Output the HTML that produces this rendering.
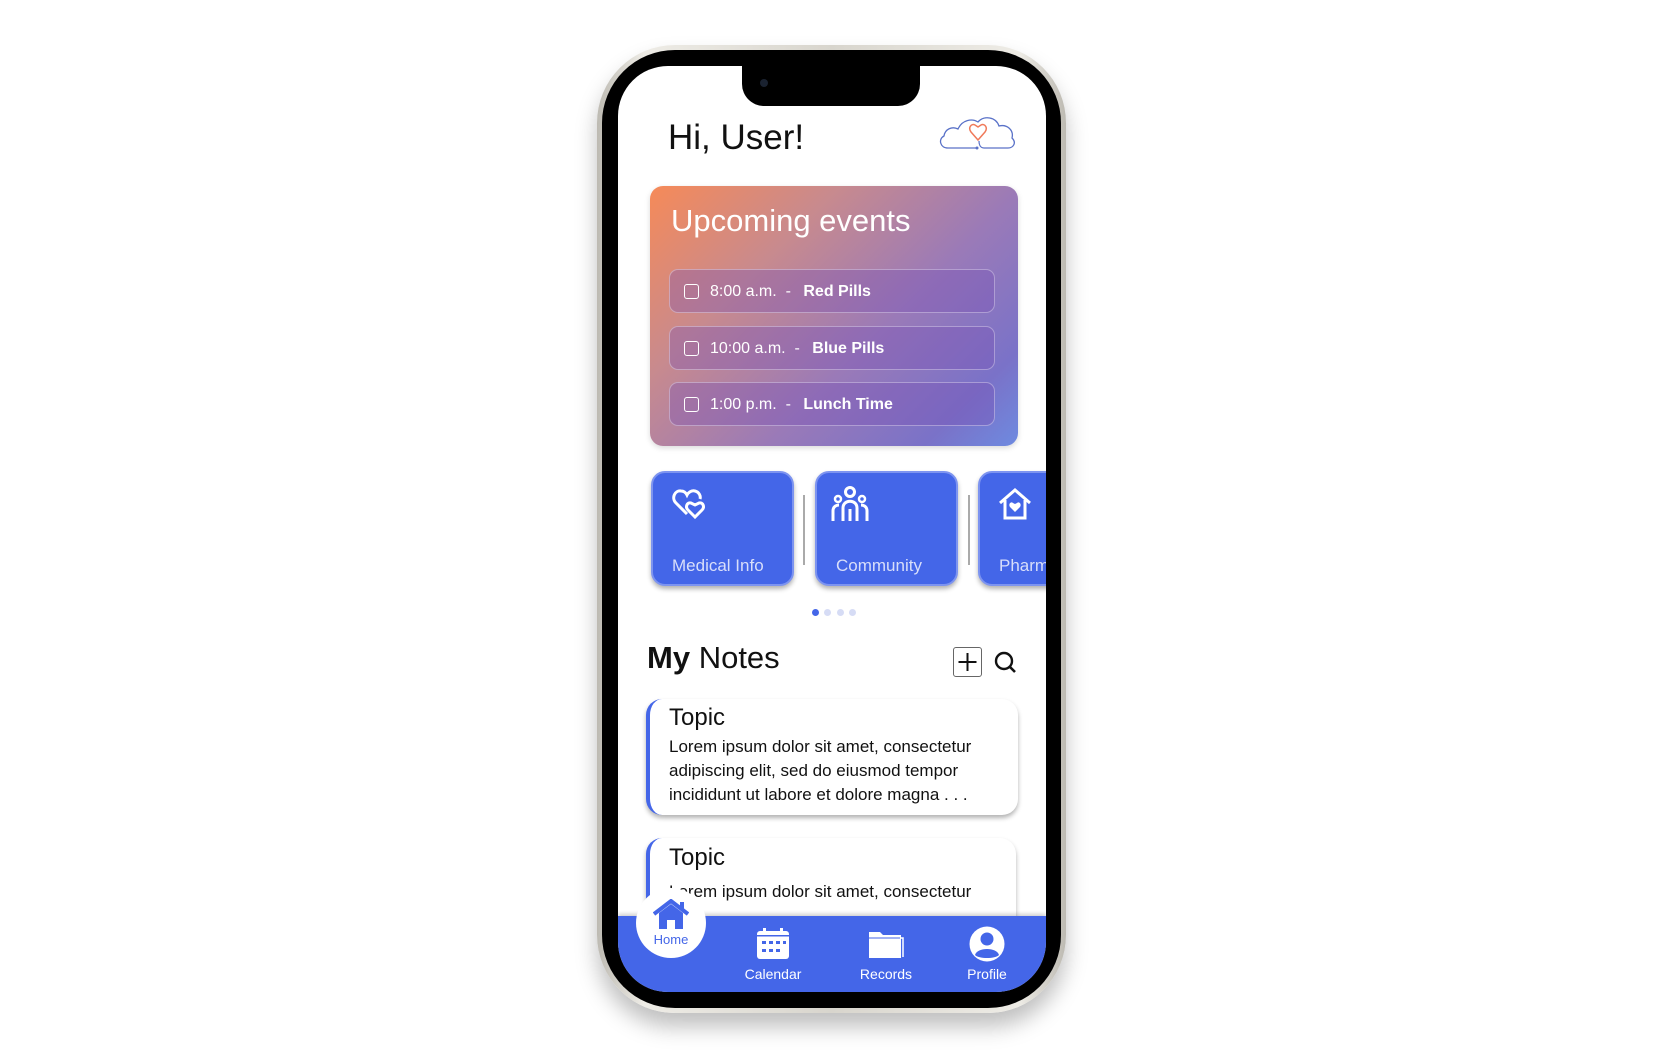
<!DOCTYPE html>
<html><head><meta charset="utf-8"><style>
*{margin:0;padding:0;box-sizing:border-box}
body{width:1663px;height:1057px;background:#fff;position:relative;overflow:hidden;font-family:"Liberation Sans",sans-serif}
.abs{position:absolute}
.frame{left:597px;top:45px;width:469px;height:968px;border-radius:78px;background:linear-gradient(90deg,#bdbab2,#eeece6 10%,#d8d5cd 50%,#eeece6 90%,#bdbab2);box-shadow:0 14px 22px rgba(0,0,0,.25)}
.bezel{left:602px;top:50px;width:459px;height:958px;border-radius:73px;background:#000}
.screen{left:618px;top:66px;width:428px;height:926px;border-radius:50px;background:#fff;overflow:hidden}
.notch{left:742px;top:60px;width:178px;height:46px;background:#000;border-radius:0 0 22px 22px}
.t{position:absolute;white-space:nowrap}
.card{left:650px;top:186px;width:368px;height:260px;border-radius:13px;background:linear-gradient(135deg,#f68a58 0%,#c88a8e 30%,#9a7ab8 60%,#7a72c8 85%,#6e8ae0 100%);box-shadow:0 2px 6px rgba(0,0,0,.15)}
.row{position:absolute;left:669px;width:326px;height:44px;border-radius:9px;background:rgba(120,80,180,.35);border:1px solid rgba(255,255,255,.35)}
.cb{position:absolute;left:14px;top:14px;width:15px;height:15px;border:1.6px solid #fff;border-radius:3px}
.row .t{left:40px;top:13px;color:#fff;font-size:16px}
.row b{margin-left:8px}
.tile{position:absolute;top:11px;height:115px;width:143px;border-radius:14px;background:#4466e8;box-shadow:0 3px 5px rgba(0,0,0,.3);border:2px solid #7d94f0}
.tile .t{left:19px;top:83px;color:#d8defa;font-size:17px}
.div{position:absolute;top:35px;width:1.5px;height:70px;background:#aaa}
.dot{position:absolute;top:609px;width:7px;height:7px;border-radius:50%;background:#d6dcf5}
.note{position:absolute;left:646px;width:372px;background:#fff;border-radius:16px;border-left:4px solid #4466e8;box-shadow:0 3px 5px rgba(0,0,0,.3)}
.nl{position:absolute;color:#fff;font-size:14px;top:966px;text-align:center;width:100px}
</style></head><body>
<div class="abs frame"></div>
<div class="abs bezel"></div>
<div class="abs screen"></div>
<div class="abs notch"></div>
<div class="abs" style="left:760px;top:79px;width:8px;height:8px;border-radius:50%;background:#1a2230"></div>

<div class="t" style="left:668px;top:118px;font-size:35px;color:#111">Hi, User!</div>
<svg class="abs" style="left:938px;top:113px" width="80" height="38" viewBox="0 0 80 38">
<path d="M39 35 H10 C2 35 0 26 6 23 C7 16 14 13 20 16 C24 7 34 5 40 9 C46 2 58 4 61 13 C69 11 76 17 74 25 C79 30 75 35 70 35 H46 C42 35 41 31 41 28" fill="none" stroke="#5a72c8" stroke-width="1.3"/>
<circle cx="39" cy="35" r="1.5" fill="#5a72c8"/>
<path d="M40 27 L33 19 C30 15 33 10 37 12 L40 14 L43 12 C47 10 50 15 47 19 Z" fill="none" stroke="#f07a5a" stroke-width="1.5"/>
</svg>

<div class="abs card"></div>
<div class="t" style="left:671px;top:203px;font-size:31px;color:#fff">Upcoming events</div>
<div class="row" style="top:269px"><div class="cb"></div><div class="t">8:00 a.m. &nbsp;- <b>Red Pills</b></div></div>
<div class="row" style="top:326px"><div class="cb"></div><div class="t">10:00 a.m. &nbsp;- <b>Blue Pills</b></div></div>
<div class="row" style="top:382px"><div class="cb"></div><div class="t">1:00 p.m. &nbsp;- <b>Lunch Time</b></div></div>

<div class="abs" style="left:618px;top:460px;width:428px;height:140px;overflow:hidden">
<div class="tile" style="left:33px"><div class="t">Medical Info</div>
<svg style="position:absolute;left:19px;top:15px" width="36" height="32" viewBox="0 0 36 32"><path d="M15 26 L4 15 C-1 10 3 2 9 3 C12 3 14 5 15 7 C16 5 19 2 23 3 C27 4 29 8 28 11" fill="none" stroke="#fff" stroke-width="3"/><path d="M23 29 L16 22 C13 19 15 14 19 15 L23 17 L27 15 C31 14 33 19 30 22 Z" fill="none" stroke="#fff" stroke-width="3"/></svg></div>
<div class="div" style="left:185px"></div>
<div class="tile" style="left:197px"><div class="t">Community</div>
<svg style="position:absolute;left:14px;top:12px" width="38" height="38" viewBox="0 0 38 38"><circle cx="19" cy="7" r="4.5" fill="none" stroke="#fff" stroke-width="3"/><circle cx="7" cy="14" r="3" fill="none" stroke="#fff" stroke-width="2.5"/><circle cx="31" cy="14" r="3" fill="none" stroke="#fff" stroke-width="2.5"/><path d="M12 36 V23 C12 14 26 14 26 23 V36 M19 36 V24" fill="none" stroke="#fff" stroke-width="3"/><path d="M2 36 V26 C2 21 6 20 8 20 M36 36 V26 C36 21 32 20 30 20" fill="none" stroke="#fff" stroke-width="3"/></svg></div>
<div class="div" style="left:350px"></div>
<div class="tile" style="left:360px"><div class="t">Pharmacy</div>
<svg style="position:absolute;left:18px;top:15px" width="34" height="32" viewBox="0 0 34 32"><path d="M2 15 L17 2 L32 15 M7 12 V30 H27 V12" fill="none" stroke="#fff" stroke-width="3"/><path d="M17 24 L12 19 C10 16 13 13 15 15 L17 16 L19 15 C21 13 24 16 22 19 Z" fill="#fff"/></svg></div>
</div>
<div class="dot" style="left:812px;background:#4466e8"></div>
<div class="dot" style="left:824px"></div>
<div class="dot" style="left:837px"></div>
<div class="dot" style="left:849px"></div>

<div class="t" style="left:647px;top:640px;font-size:31px;color:#111"><b>My</b> Notes</div>
<div class="abs" style="left:953px;top:647px;width:29px;height:30px;border:1px solid #666;border-radius:3px"></div>
<svg class="abs" style="left:953px;top:647px" width="29" height="30"><path d="M14.5 6 V24 M5.5 15 H23.5" stroke="#111" stroke-width="2"/></svg>
<svg class="abs" style="left:993px;top:650px" width="26" height="26"><circle cx="11" cy="11" r="8" fill="none" stroke="#111" stroke-width="2.4"/><path d="M17 17 L22 22" stroke="#111" stroke-width="2.6"/></svg>

<div class="note" style="top:699px;height:116px">
<div class="t" style="left:19px;top:5px;font-size:24px;color:#111">Topic</div>
<div class="t" style="left:19px;top:36px;font-size:17px;line-height:24px;color:#111">Lorem ipsum dolor sit amet, consectetur<br>adipiscing elit, sed do eiusmod tempor<br>incididunt ut labore et dolore magna . . .</div>
</div>
<div class="note" style="top:838px;height:120px;left:646px;width:370px">
<div class="t" style="left:19px;top:6px;font-size:24px;color:#111">Topic</div>
<div class="t" style="left:19px;top:42px;font-size:17px;line-height:24px;color:#111">Lorem ipsum dolor sit amet, consectetur</div>
</div>

<div class="abs" style="left:618px;top:916px;width:428px;height:76px;border-radius:0 0 50px 50px;background:#4466e8;box-shadow:0 -2px 4px rgba(0,0,0,.2)"></div>
<div class="abs" style="left:636px;top:888px;width:70px;height:70px;border-radius:50%;background:#fff"></div>
<svg class="abs" style="left:653px;top:899px" width="36" height="30" viewBox="0 0 36 30"><path d="M1 15 L18 2 L35 15" fill="none" stroke="#4466e8" stroke-width="4"/><path d="M27 3 H31 V12 L27 9Z" fill="#4466e8"/><path d="M6 14 L18 5 L30 14 V30 H22 V21 H14 V30 H6Z" fill="#4466e8"/></svg>
<div class="nl" style="left:621px;top:932px;color:#4466e8;font-size:13px">Home</div>

<svg class="abs" style="left:756px;top:928px" width="34" height="32" viewBox="0 0 34 32"><rect x="1" y="3" width="32" height="28" rx="3" fill="#fff"/><rect x="7" y="0" width="3" height="6" fill="#fff"/><rect x="24" y="0" width="3" height="6" fill="#fff"/><rect x="1" y="7" width="32" height="1.5" fill="#4466e8"/><g fill="#4466e8"><rect x="6" y="13" width="4" height="3"/><rect x="13" y="13" width="4" height="3"/><rect x="20" y="13" width="4" height="3"/><rect x="27" y="13" width="3" height="3"/><rect x="6" y="21" width="4" height="3"/><rect x="13" y="21" width="4" height="3"/><rect x="20" y="21" width="4" height="3"/></g></svg>
<div class="nl" style="left:723px">Calendar</div>
<svg class="abs" style="left:868px;top:929px" width="36" height="30" viewBox="0 0 36 30"><path d="M1 3 H12 L15 6 H33 V29 H1Z" fill="#fff"/><path d="M5 9 H35 V28" fill="none" stroke="#fff" stroke-width="1.5"/><path d="M1 9 H32" stroke="#4466e8" stroke-width="1"/></svg>
<div class="nl" style="left:836px">Records</div>
<svg class="abs" style="left:969px;top:926px" width="36" height="36" viewBox="0 0 36 36"><circle cx="18" cy="18" r="17.5" fill="#fff"/><circle cx="18" cy="13" r="6.5" fill="#4466e8"/><path d="M6 29 C8 21 28 21 30 29 C26 33 10 33 6 29Z" fill="#4466e8"/></svg>
<div class="nl" style="left:937px">Profile</div>
</body></html>
